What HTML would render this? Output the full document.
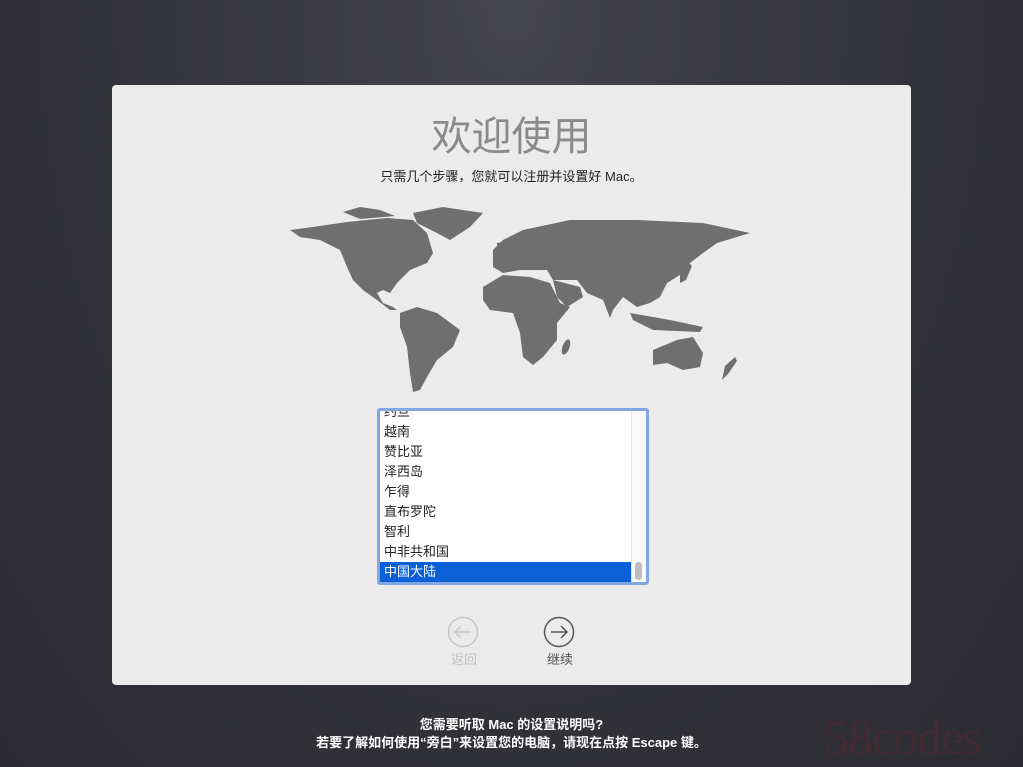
<!DOCTYPE html>
<html><head><meta charset="utf-8"><style>
body{margin:0;width:1023px;height:767px;overflow:hidden;background:radial-gradient(ellipse at 50% 0%,#45454c 0%,#35353c 45%,#2b2b31 100%);font-family:"Liberation Sans","Noto Sans CJK SC",sans-serif;position:relative}
.panel{position:absolute;left:112px;top:85px;width:799px;height:600px;background:#ebebeb;border-radius:4px}
.t{position:absolute;left:0;width:1023px;text-align:center}
.list{position:absolute;left:377px;top:408px;width:266px;height:171px;border:3px solid #82a6e3;border-radius:3px;background:#fff;overflow:hidden}
.row{position:absolute;left:0;width:248px;height:20px;line-height:20px;padding-left:4px;font-size:13px;color:#222}
.sel{background:#0b5fd7;color:#fff}
.sb{position:absolute;right:0;top:0;width:14px;height:171px;background:#fafafa;border-left:1px solid #e4e4e4}
</style></head><body>
<div class="panel"></div>
<div class="t" style="top:104px;font-size:40px;color:#8a8a8a;letter-spacing:0px">欢迎使用</div>
<div class="t" style="top:166px;font-size:13px;color:#222">只需几个步骤，您就可以注册并设置好 Mac。</div>
<svg style="position:absolute;left:0;top:0" width="1023" height="767" fill="#6f6f6f">
<polygon points="290,230 313,227 347,222 387,218 413,220 427,233 433,253 427,263 410,270 403,277 397,283 390,293 383,290 377,293 383,303 393,307 397,310 390,310 377,300 363,290 353,280 347,267 340,250 320,240 300,237"/>
<polygon points="413,213 443,207 483,213 470,227 450,240 437,233 417,223"/>
<polygon points="400,313 417,307 437,313 460,330 453,347 437,360 427,377 420,390 413,392 410,373 407,347 400,327"/>
<polygon points="493,250 503,240 523,230 570,220 637,220 703,223 750,233 717,243 703,253 690,263 683,273 667,283 660,297 650,303 637,307 623,297 613,310 610,318 603,300 587,293 577,280 553,280 547,270 533,270 520,270 503,273 493,267"/>
<polygon points="483,287 503,275 530,277 550,283 560,303 570,307 557,323 557,340 543,357 533,365 523,357 520,333 513,313 490,310 483,300"/>
<polygon points="553,280 580,287 583,297 567,307 557,297"/>
<ellipse cx="566" cy="347" rx="3.5" ry="8" transform="rotate(20 566 347)"/>
<polygon points="630,313 670,320 703,327 700,332 653,330 633,320"/>
<polygon points="653,350 677,340 693,337 703,353 700,367 683,370 667,363 653,365"/>
<polygon points="725,366 735,357 737,361 728,374 722,380"/>
<polygon points="680,270 688,262 692,266 686,280 680,283"/>
<polygon points="497,243 503,242 504,252 498,254"/>
<polygon points="343,212 360,207 380,210 395,216 360,219"/>
</svg>
<div class="list">
<div class="row" style="top:-9px">约旦</div>
<div class="row" style="top:11px">越南</div>
<div class="row" style="top:31px">赞比亚</div>
<div class="row" style="top:51px">泽西岛</div>
<div class="row" style="top:71px">乍得</div>
<div class="row" style="top:91px">直布罗陀</div>
<div class="row" style="top:111px">智利</div>
<div class="row" style="top:131px">中非共和国</div>
<div class="row sel" style="top:151px">中国大陆</div>
<div class="sb"><div style="position:absolute;left:3px;top:151px;width:7px;height:18px;border-radius:4px;background:#bdbdbd"></div></div>
</div>
<svg style="position:absolute;left:447px;top:616px" width="32" height="32"><circle cx="16" cy="16" r="14.5" fill="none" stroke="#c4c4c4" stroke-width="1.5"/><path d="M24 16H8M14 10l-6 6 6 6" fill="none" stroke="#c4c4c4" stroke-width="1.5"/></svg>
<svg style="position:absolute;left:543px;top:616px" width="32" height="32"><circle cx="16" cy="16" r="14.5" fill="none" stroke="#555" stroke-width="1.5"/><path d="M8 16h16M18 10l6 6-6 6" fill="none" stroke="#555" stroke-width="1.5"/></svg>
<div style="position:absolute;left:439px;top:649px;width:50px;text-align:center;font-size:13px;color:#c0c0c0">返回</div>
<div style="position:absolute;left:535px;top:649px;width:50px;text-align:center;font-size:13px;color:#555">继续</div>
<div class="t" style="top:714px;font-size:13px;font-weight:bold;color:#fff">您需要听取 Mac 的设置说明吗?</div>
<div class="t" style="top:732px;font-size:13px;font-weight:bold;color:#fff">若要了解如何使用“旁白”来设置您的电脑，请现在点按 Escape 键。</div>
<div style="position:absolute;left:824px;top:708px;font-family:'Liberation Serif',serif;font-size:50px;letter-spacing:-1px;color:#4e2a30;opacity:.6">58codes</div>
</body></html>
